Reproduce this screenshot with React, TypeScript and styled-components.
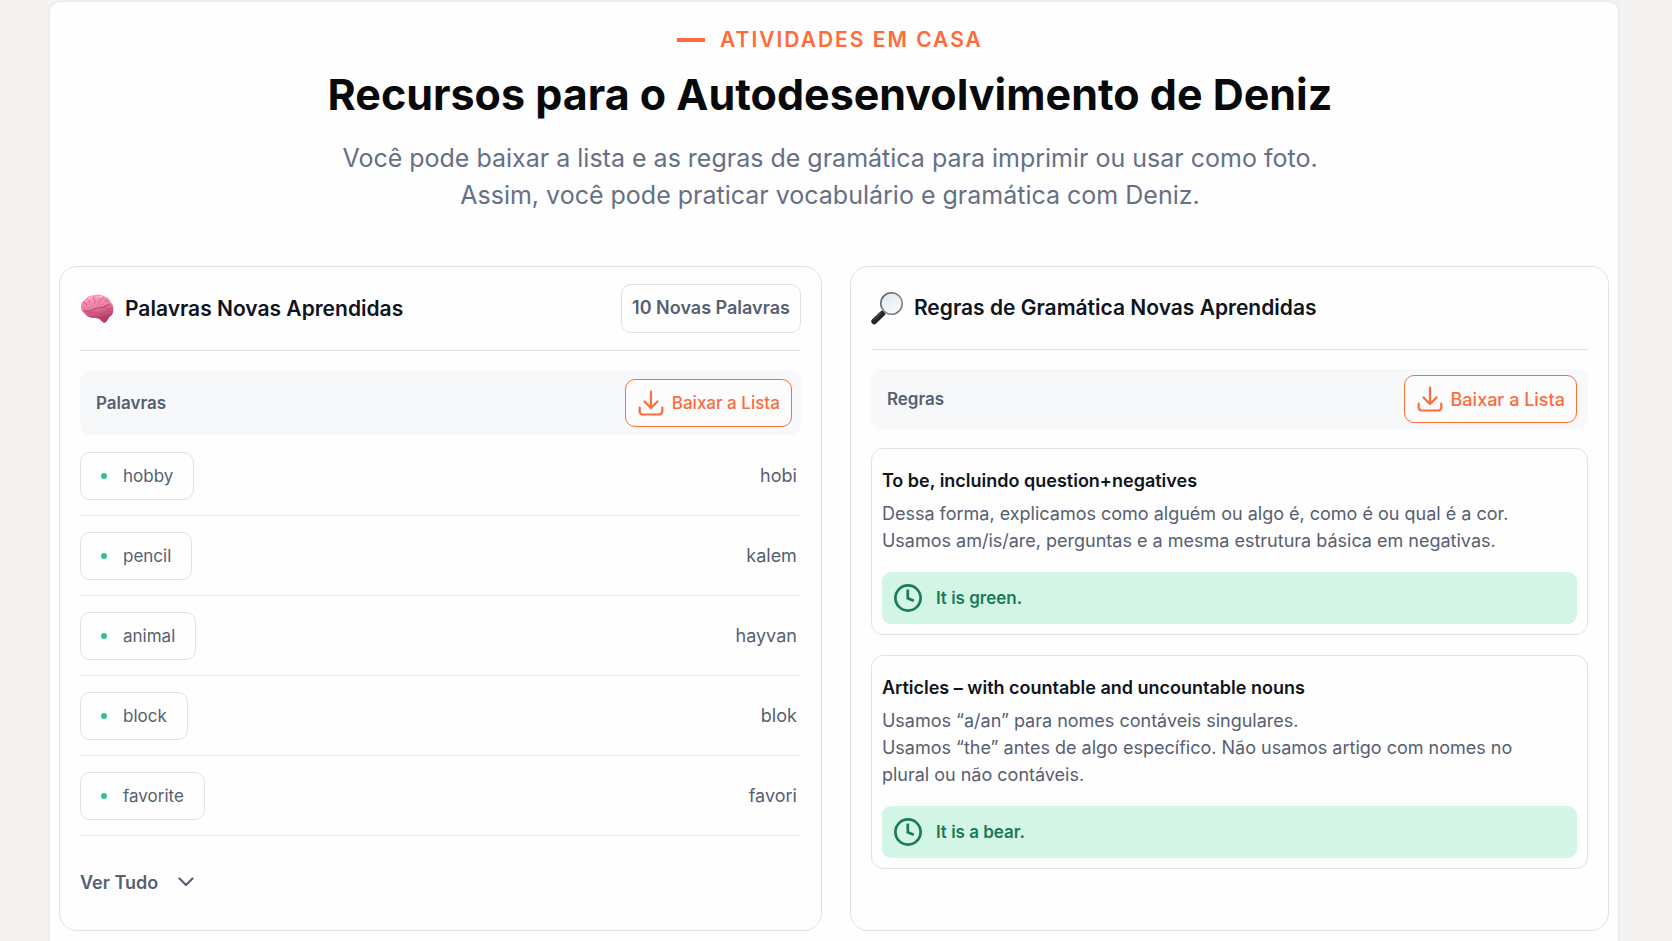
import React from "react";
import styled, { createGlobalStyle } from "styled-components";

const color = {
  page: "#f4f3f2",
  sheet: "#fefefe",
  line: "#dfe2ea",
  rowLine: "#e6e9ee",
  ink: "#10141d",
  slate: "#566071",
  muted: "#667085",
  orange: "#ff6b3a",
  bar: "#f7f8fa",
  mint: "#d3f5e5",
  green: "#1b7a57",
  dot: "#35c48d",
};

const GlobalStyle = createGlobalStyle`
  *, *::before, *::after { box-sizing: border-box; }
  body {
    margin: 0;
    background: ${color.page};
    font-family: Inter, "Liberation Sans", sans-serif;
    color: ${color.slate};
  }
  h1, h2, h3, p { margin: 0; }
`;

const Page = styled.div`
  display: flex;
  min-height: 100vh;
  padding: 2px 54px 0 50px;
`;

const Sheet = styled.main`
  flex: 1;
  min-width: 0;
  padding: 26px 9px 8px;
  background: ${color.sheet};
  border-radius: 10px 10px 0 0;
  box-shadow: 0 0 2px 1px #e9e7e4;
`;

const Intro = styled.header`
  display: flex;
  flex-direction: column;
  align-items: center;
  padding-right: 8px;
  text-align: center;
`;

const Eyebrow = styled.p`
  display: flex;
  align-items: center;
  gap: 15px;
  font-size: 21px;
  line-height: 24px;
  font-weight: 600;
  letter-spacing: 2px;
  text-transform: uppercase;
  color: ${color.orange};

  &::before {
    content: "";
    width: 28px;
    height: 4px;
    background: currentColor;
  }
`;

const Heading = styled.h1`
  margin-top: 16px;
  font-size: 43px;
  line-height: 52px;
  font-weight: 700;
  color: #08090b;
`;

const Lead = styled.p`
  margin-top: 20px;
  font-size: 25px;
  line-height: 37px;
  color: ${color.muted};
`;

const Columns = styled.div`
  display: grid;
  grid-template-columns: 201fr 200fr;
  gap: 28px;
  margin-top: 52px;
`;

const Card = styled.section`
  min-width: 0;
  padding: 0 20px 26px;
  border: 1px solid ${color.line};
  border-radius: 18px;
`;

const CardHeader = styled.header`
  display: flex;
  align-items: center;
  justify-content: space-between;
  min-height: 83px;
  padding: 17px 0;
  border-bottom: 1px solid ${color.line};
`;

const CardTitle = styled.h2`
  display: flex;
  align-items: center;
  gap: 11px;
  font-size: 21px;
  line-height: 28px;
  font-weight: 600;
  color: ${color.ink};
`;

const Badge = styled.span`
  padding: 12px 10px 13px;
  border: 1px solid ${color.line};
  border-radius: 10px;
  font-size: 18px;
  line-height: 22px;
  font-weight: 600;
`;

const Toolbar = styled.div<{ $tight?: boolean }>`
  display: flex;
  align-items: center;
  justify-content: space-between;
  margin-top: ${(p) => (p.$tight ? 19 : 20)}px;
  padding: ${(p) => (p.$tight ? "6px 11px 6px 16px" : "8px 9px 8px 16px")};
  border-radius: 10px;
  background: ${color.bar};
  font-size: 17px;
  line-height: 24px;
  font-weight: 600;
`;

const DownloadButton = styled.button<{ $wide?: boolean }>`
  display: flex;
  align-items: center;
  gap: 8px;
  height: 48px;
  padding: 0 11px 0 12px;
  border: 1px solid ${color.orange};
  border-radius: 10px;
  background: #fcfcfc;
  color: ${color.orange};
  font-family: inherit;
  font-size: ${(p) => (p.$wide ? 18 : 17)}px;
  font-weight: 500;
  cursor: pointer;
`;

const WordTable = styled.table`
  width: 100%;
  margin-top: 1px;
  border-spacing: 0;
  font-size: 17px;
  line-height: 24px;
`;

const WordCell = styled.th`
  height: 80px;
  padding: 0;
  border-bottom: 1px solid ${color.rowLine};
  font-weight: 400;
  text-align: left;
`;

const MeaningCell = styled.td`
  padding: 0 4px 0 0;
  border-bottom: 1px solid ${color.rowLine};
  font-size: 18px;
  text-align: right;
`;

const WordPill = styled.span`
  display: inline-flex;
  align-items: center;
  gap: 16px;
  height: 48px;
  padding: 0 20px;
  border: 1px solid ${color.line};
  border-radius: 10px;
  vertical-align: middle;

  &::before {
    content: "";
    width: 6px;
    height: 6px;
    border-radius: 50%;
    background: ${color.dot};
  }
`;

const MoreButton = styled.button`
  display: flex;
  align-items: center;
  gap: 20px;
  height: 44px;
  margin-top: 24px;
  padding: 0;
  border: 0;
  background: none;
  color: ${color.slate};
  font-family: inherit;
  font-size: 18px;
  font-weight: 600;
  cursor: pointer;
`;

const RuleList = styled.div`
  display: flex;
  flex-direction: column;
  gap: 20px;
  margin-top: 19px;
`;

const Rule = styled.article`
  padding: 20px 10px 10px;
  border: 1px solid ${color.line};
  border-radius: 12px;
`;

const RuleTitle = styled.h3`
  font-size: 18px;
  line-height: 24px;
  font-weight: 600;
  color: ${color.ink};
`;

const RuleText = styled.p`
  margin-top: 7px;
  padding-right: 24px;
  font-size: 18px;
  line-height: 27px;
`;

const Example = styled.p`
  display: flex;
  align-items: center;
  gap: 14px;
  height: 52px;
  margin-top: 18px;
  padding: 0 12px;
  border-radius: 9px;
  background: ${color.mint};
  color: ${color.green};
  font-size: 17px;
  font-weight: 600;
`;

const BrainIcon = () => (
  <svg width="34" height="30" viewBox="0 0 34 30" aria-hidden="true">
    <defs>
      <linearGradient id="brainFill" x1="0.3" y1="0" x2="0.6" y2="1">
        <stop offset="0" stopColor="#ff9fbc" />
        <stop offset="0.5" stopColor="#ee7fa2" />
        <stop offset="1" stopColor="#b83a66" />
      </linearGradient>
    </defs>
    <path d="M17 22.500c2 2.500 4.500 4.800 7.200 6.600 2.200-1 4-3.200 5-6.200l-4-3z" fill="#b23f67" />
    <path
      d="M1 13.500C.6 9.500 3 6.300 6 5 7.500 2.500 11 .8 14 1.400 17-.1 22 .3 24.500 2.600c3 .6 5.300 2.800 5.800 5.400 2.300 1.700 3.400 4.500 3 7.300.2 3.500-1.200 6.500-4 7.700-2.500 1-4.300.2-6.300.4-2.500 1-6 1.600-8.500.3C11 24.500 6.500 23 5 19.800 2.500 18.500 1 16 1 13.500z"
      fill="url(#brainFill)"
    />
    <g fill="none" stroke="#c24b77" strokeWidth="0.9" strokeLinecap="round">
      <path d="M4 16.500c3.500 1.500 7 .5 9.500-1 3-2 6.500-1.200 9.500-2 2.500-.8 4-2.500 6.500-2.800" strokeWidth="1.300" />
      <path d="M7 5c2 .5 3 2 2.500 4M14 1.800c-1.500 1.500-1 3.200.8 4.200 1 1.500.2 3-.8 4" strokeOpacity="0.6" />
      <path d="M24 3c-2 1-2 2.800-4 3.600-1.500.8-1.500 2.400-.8 3.600M25 6c1.500 0 3 .8 3.500 2" strokeOpacity="0.6" />
      <path d="M4 8.500c1.500 0 2.500 1 2.500 2.500M6 19.500c3-.2 5-1.500 8-1.500s5 2.500 8 1.500c3-.8 4-3.500 8-3.500" />
      <path d="M15 23c1.500-1.500 3.500-2 5.500-1M25 14c1.500 1 3.500 1 5.500 0" />
    </g>
    <path d="M6 7.500C8 4.500 11 3 13 3.200M17 3c2-.8 4-.6 5.500 0" fill="none" stroke="#ffc3d6" strokeWidth="1" strokeLinecap="round" />
  </svg>
);

const MagnifierIcon = () => (
  <svg width="32" height="33" viewBox="0 0 32 33" aria-hidden="true">
    <defs>
      <linearGradient id="lens" x1="0.2" y1="0" x2="0.7" y2="1">
        <stop offset="0" stopColor="#dde8f1" />
        <stop offset="1" stopColor="#fafcfd" />
      </linearGradient>
      <linearGradient id="rim" x1="0" y1="0" x2="1" y2="1">
        <stop offset="0" stopColor="#4f5458" />
        <stop offset="0.6" stopColor="#8e9296" />
        <stop offset="1" stopColor="#6b6f73" />
      </linearGradient>
    </defs>
    <path d="M13.500 19.500l-2.500 2.500" stroke="#85898d" strokeWidth="3" />
    <path d="M11.500 21.500l-8.300 7.900" stroke="#24272d" strokeWidth="5.800" strokeLinecap="round" />
    <path d="M10 21l-7.400 7" stroke="#5b6068" strokeWidth="1" strokeLinecap="round" />
    <circle cx="20.500" cy="11.500" r="10.700" fill="url(#lens)" stroke="url(#rim)" strokeWidth="1.600" />
  </svg>
);

const DownloadIcon = () => (
  <svg width="26" height="26" viewBox="0 0 26 26" fill="none" stroke="currentColor" strokeWidth="2.200" strokeLinecap="round" strokeLinejoin="round" aria-hidden="true">
    <path d="M13 1.500v16M6.500 11.500l6.500 6.500 6.500-6.500" />
    <path d="M1.700 17.500v4a3 3 0 0 0 3 3h16.600a3 3 0 0 0 3-3v-4" />
  </svg>
);

const ClockIcon = () => (
  <svg width="28" height="28" viewBox="0 0 28 28" fill="none" stroke="currentColor" strokeWidth="2.700" aria-hidden="true">
    <circle cx="14" cy="14" r="12.600" />
    <path d="M13.800 5.500v8.800l6 2.400" />
  </svg>
);

const ChevronIcon = () => (
  <svg width="16" height="10" viewBox="0 0 16 10" fill="none" stroke="currentColor" strokeWidth="2.200" strokeLinecap="round" strokeLinejoin="round" aria-hidden="true">
    <path d="M1.500 1.500L8 8l6.500-6.500" />
  </svg>
);

const words = [
  { word: "hobby", meaning: "hobi" },
  { word: "pencil", meaning: "kalem" },
  { word: "animal", meaning: "hayvan" },
  { word: "block", meaning: "blok" },
  { word: "favorite", meaning: "favori" },
];

const rules = [
  {
    title: "To be, incluindo question+negatives",
    lines: [
      "Dessa forma, explicamos como alguém ou algo é, como é ou qual é a cor.",
      "Usamos am/is/are, perguntas e a mesma estrutura básica em negativas.",
    ],
    example: "It is green.",
  },
  {
    title: "Articles – with countable and uncountable nouns",
    lines: [
      "Usamos “a/an” para nomes contáveis singulares.",
      "Usamos “the” antes de algo específico. Não usamos artigo com nomes no plural ou não contáveis.",
    ],
    example: "It is a bear.",
  },
];

const withBreaks = (lines: string[]) =>
  lines.map((line, i) => (
    <React.Fragment key={line}>
      {i > 0 && <br />}
      {line}
    </React.Fragment>
  ));

export default function App() {
  return (
    <>
      <GlobalStyle />
      <Page>
        <Sheet>
          <Intro>
            <Eyebrow>Atividades em casa</Eyebrow>
            <Heading>Recursos para o Autodesenvolvimento de Deniz</Heading>
            <Lead>
              {withBreaks([
                "Você pode baixar a lista e as regras de gramática para imprimir ou usar como foto.",
                "Assim, você pode praticar vocabulário e gramática com Deniz.",
              ])}
            </Lead>
          </Intro>

          <Columns>
            <Card>
              <CardHeader>
                <CardTitle>
                  <BrainIcon />
                  Palavras Novas Aprendidas
                </CardTitle>
                <Badge>10 Novas Palavras</Badge>
              </CardHeader>
              <Toolbar>
                <span>Palavras</span>
                <DownloadButton type="button">
                  <DownloadIcon />
                  Baixar a Lista
                </DownloadButton>
              </Toolbar>
              <WordTable>
                <tbody>
                  {words.map(({ word, meaning }) => (
                    <tr key={word}>
                      <WordCell scope="row">
                        <WordPill>{word}</WordPill>
                      </WordCell>
                      <MeaningCell>{meaning}</MeaningCell>
                    </tr>
                  ))}
                </tbody>
              </WordTable>
              <MoreButton type="button">
                Ver Tudo
                <ChevronIcon />
              </MoreButton>
            </Card>

            <Card>
              <CardHeader>
                <CardTitle>
                  <MagnifierIcon />
                  Regras de Gramática Novas Aprendidas
                </CardTitle>
              </CardHeader>
              <Toolbar $tight>
                <span>Regras</span>
                <DownloadButton type="button" $wide>
                  <DownloadIcon />
                  Baixar a Lista
                </DownloadButton>
              </Toolbar>
              <RuleList>
                {rules.map((rule) => (
                  <Rule key={rule.title}>
                    <RuleTitle>{rule.title}</RuleTitle>
                    <RuleText>{withBreaks(rule.lines)}</RuleText>
                    <Example>
                      <ClockIcon />
                      {rule.example}
                    </Example>
                  </Rule>
                ))}
              </RuleList>
            </Card>
          </Columns>
        </Sheet>
      </Page>
    </>
  );
}
